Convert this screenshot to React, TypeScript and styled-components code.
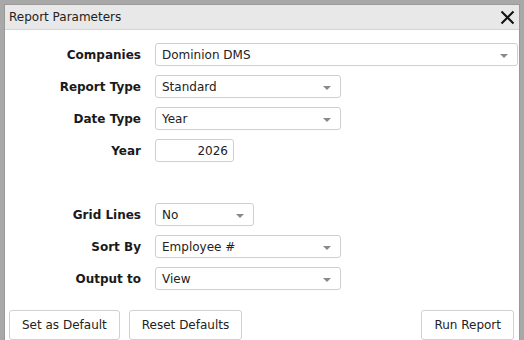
import { createGlobalStyle } from "styled-components";
import styled from "styled-components";

const GlobalStyle = createGlobalStyle`
  html, body {
    margin: 0;
    padding: 0;
    background: #a8a8a8;
    font-family: "DejaVu Sans", Verdana, sans-serif;
  }
`;

const Backdrop = styled.div`
  width: 524px;
  height: 340px;
  padding: 4px 4px 0 4px;
  box-sizing: border-box;
  overflow: hidden;
`;

const Dialog = styled.div`
  background: #fff;
  border: 1px solid #9a9a9a;
  border-bottom: none;
  height: 100%;
  box-sizing: border-box;
  display: flex;
  flex-direction: column;
`;

const TitleBar = styled.div`
  height: 24px;
  background: #e8e8e8;
  border-bottom: 1px solid #d4d4d4;
  display: flex;
  align-items: center;
  justify-content: space-between;
  padding: 0 4px 0 4px;
`;

const Title = styled.span`
  font-size: 12px;
  color: #222;
`;

const CloseButton = styled.button`
  border: none;
  background: none;
  padding: 0;
  width: 16px;
  height: 16px;
  display: flex;
  align-items: center;
  justify-content: center;
  cursor: pointer;
`;

const Form = styled.div`
  display: grid;
  grid-template-columns: 136px 1fr;
  column-gap: 14px;
  row-gap: 9px;
  padding: 13px 1px 0 0;
  grid-auto-rows: 23px;
`;

const Label = styled.label`
  font-size: 12px;
  font-weight: bold;
  color: #1a1a1a;
  text-align: right;
  align-self: center;
`;

const Spacer = styled.div`
  grid-column: 1 / 3;
`;

const Select = styled.div<{ $width?: number }>`
  width: ${(p) => (p.$width ? `${p.$width}px` : "auto")};
  height: 23px;
  box-sizing: border-box;
  border: 1px solid #cfcfcf;
  border-radius: 3px;
  display: flex;
  align-items: center;
  justify-content: space-between;
  padding: 0 9px 0 6px;
  font-size: 12px;
  color: #222;
`;

const Arrow = styled.span`
  width: 0;
  height: 0;
  border-left: 4px solid transparent;
  border-right: 4px solid transparent;
  border-top: 4px solid #8a8a8a;
  margin-top: 2px;
`;

const NumberInput = styled.div`
  width: 79px;
  height: 23px;
  box-sizing: border-box;
  border: 1px solid #cfcfcf;
  border-radius: 3px;
  display: flex;
  align-items: center;
  justify-content: flex-end;
  padding: 0 5px;
  font-size: 12px;
  color: #222;
`;

const Footer = styled.div`
  display: flex;
  gap: 9px;
  padding: 20px 5px 0 4px;
`;

const Button = styled.button`
  height: 30px;
  background: #fff;
  border: 1px solid #d0d0d0;
  border-radius: 3px;
  padding: 0 12px;
  font-family: "DejaVu Sans", Verdana, sans-serif;
  font-size: 12px;
  color: #222;
`;

const Push = styled.div`
  flex: 1;
`;

function Dropdown({ value, width }: { value: string; width?: number }) {
  return (
    <Select $width={width}>
      <span>{value}</span>
      <Arrow />
    </Select>
  );
}

export default function App() {
  return (
    <>
      <GlobalStyle />
      <Backdrop>
        <Dialog>
          <TitleBar>
            <Title>Report Parameters</Title>
            <CloseButton aria-label="Close">
              <svg width="15" height="15" viewBox="0 0 15 15">
                <path d="M1.5 1.5 L13.5 13.5 M13.5 1.5 L1.5 13.5" stroke="#111" strokeWidth="2" />
              </svg>
            </CloseButton>
          </TitleBar>
          <Form>
            <Label>Companies</Label>
            <Dropdown value="Dominion DMS" />
            <Label>Report Type</Label>
            <Dropdown value="Standard" width={186} />
            <Label>Date Type</Label>
            <Dropdown value="Year" width={186} />
            <Label>Year</Label>
            <NumberInput>2026</NumberInput>
            <Spacer />
            <Label>Grid Lines</Label>
            <Dropdown value="No" width={99} />
            <Label>Sort By</Label>
            <Dropdown value="Employee #" width={186} />
            <Label>Output to</Label>
            <Dropdown value="View" width={186} />
          </Form>
          <Footer>
            <Button>Set as Default</Button>
            <Button>Reset Defaults</Button>
            <Push />
            <Button>Run Report</Button>
          </Footer>
        </Dialog>
      </Backdrop>
    </>
  );
}
